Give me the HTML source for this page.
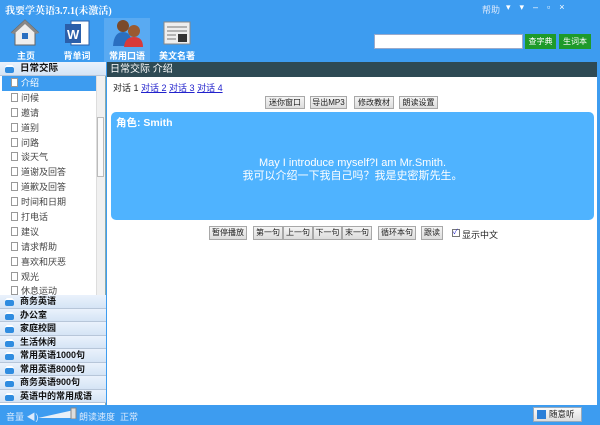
<!DOCTYPE html>
<html><head><meta charset="utf-8"><style>
*{margin:0;padding:0;box-sizing:border-box}
body{width:600px;height:425px;overflow:hidden;background:#3d9cf0;font-family:"Liberation Sans","Noto Sans CJK SC",sans-serif;font-size:9px;position:relative}
.a{position:absolute}
.title{left:5px;top:2px;color:#fff;font-weight:bold;font-size:10px;font-family:"Liberation Serif","Noto Serif CJK SC",serif}
.tb{color:#fff;font-size:9px;font-weight:bold;text-align:center;width:40px}
.btn{position:absolute;background:linear-gradient(#f4f4f4,#dcdcdc);border:1px solid #a8a8a8;font-size:8px;text-align:center;line-height:11px;color:#222}
.li{height:14.9px;line-height:14.9px;padding-left:9px;color:#444;font-size:9px;white-space:nowrap}
.li:before{content:"";display:inline-block;width:7px;height:9px;border:1px solid #999;background:#fff;margin-right:3px;vertical-align:-1px;box-sizing:border-box}
.cat{height:13.5px;border-bottom:1px solid #b7c6d9;background:linear-gradient(#eaf2fc,#d5e4f5);font-weight:bold;font-size:9px;line-height:13px;padding-left:20px;position:relative;color:#111}
.cat:before{content:"";position:absolute;left:5px;top:3px;width:9px;height:8px;background:#2f8ce0;border-radius:2px;box-shadow:inset 0 2px 0 #fff}
</style></head><body>
<div class="a title">我要学英语3.7.1(未激活)</div>
<div class="a" style="left:482px;top:3px;color:#dce9fb;font-size:9px">帮助</div>
<div class="a" style="left:506px;top:2px;color:#fff;font-size:9px;letter-spacing:9px">▾▾–▫×</div>
<div class="a" style="left:104px;top:18px;width:46px;height:44px;background:rgba(255,255,255,.15)"></div>
<svg class="a" style="left:10px;top:18px" width="30" height="30"><polygon points="15,2 2,14 5,14 5,27 25,27 25,14 28,14" fill="#eee" stroke="#666"/><polygon points="15,2 1,15 4,16 15,6 26,16 29,15" fill="#888"/><rect x="12" y="15" width="6" height="6" fill="#2a6fc0"/></svg>
<svg class="a" style="left:63px;top:19px" width="28" height="28"><rect x="8" y="2" width="18" height="24" fill="#fff" stroke="#2b5faa"/><rect x="2" y="5" width="16" height="19" fill="#2b5faa"/><text x="4" y="20" fill="#fff" font-size="13" font-weight="bold" font-family="Liberation Sans">W</text></svg>
<svg class="a" style="left:112px;top:18px" width="32" height="30"><circle cx="11" cy="8" r="6" fill="#7a4a2a"/><path d="M1 28 Q2 14 11 14 Q20 14 20 28Z" fill="#2a6fc0"/><circle cx="22" cy="13" r="6" fill="#9a5a30"/><path d="M12 29 Q13 19 22 19 Q31 19 31 29Z" fill="#d83a3a"/></svg>
<svg class="a" style="left:162px;top:20px" width="30" height="26"><rect x="2" y="2" width="26" height="22" fill="#eee" stroke="#888"/><g stroke="#777"><line x1="5" y1="7" x2="25" y2="7"/><line x1="5" y1="11" x2="25" y2="11"/><line x1="5" y1="15" x2="14" y2="15"/><line x1="5" y1="19" x2="14" y2="19"/></g><rect x="16" y="14" width="9" height="8" fill="#333"/></svg>
<div class="a tb" style="left:6px;top:49px">主页</div>
<div class="a tb" style="left:57px;top:49px">背单词</div>
<div class="a tb" style="left:107px;top:49px">常用口语</div>
<div class="a tb" style="left:157px;top:49px">美文名著</div>
<div class="a" style="left:374px;top:34px;width:149px;height:15px;background:#fff;border:1px solid #9ac"></div>
<div class="a" style="left:525px;top:34px;width:31px;height:15px;background:#1e9a2a;color:#fff;font-size:8px;line-height:15px;text-align:center">查字典</div>
<div class="a" style="left:559px;top:34px;width:32px;height:15px;background:#1e9a2a;color:#fff;font-size:8px;line-height:15px;text-align:center">生词本</div>
<div class="a" style="left:0;top:62px;width:106px;height:343px;background:#fff;border-right:1px solid #8aa"></div>
<div class="a cat" style="left:0;top:62px;width:106px;height:14px;font-size:9.5px">日常交际</div>
<div class="a" style="left:2px;top:76px;width:94px;height:219px;overflow:hidden">
<div class="li" style="background:#3d9cf0;color:#fff">介绍</div>
<div class="li">问候</div><div class="li">邀请</div><div class="li">道别</div><div class="li">问路</div><div class="li">谈天气</div><div class="li">道谢及回答</div><div class="li">道歉及回答</div><div class="li">时间和日期</div><div class="li">打电话</div><div class="li">建议</div><div class="li">请求帮助</div><div class="li">喜欢和厌恶</div><div class="li">观光</div><div class="li">休息运动</div>
</div>
<div class="a" style="left:96px;top:76px;width:9px;height:219px;background:#f0f0f0;border-left:1px solid #ddd"></div>
<div class="a" style="left:97px;top:117px;width:7px;height:60px;background:#fafafa;border:1px solid #bbb"></div>
<div class="a" style="left:0;top:295px;width:106px">
<div class="cat">商务英语</div><div class="cat">办公室</div><div class="cat">家庭校园</div><div class="cat">生活休闲</div><div class="cat">常用英语1000句</div><div class="cat">常用英语8000句</div><div class="cat">商务英语900句</div><div class="cat">英语中的常用成语</div>
</div>
<div class="a" style="left:107px;top:62px;width:490px;height:343px;background:#fff"></div>
<div class="a" style="left:107px;top:62px;width:490px;height:15px;background:#2e4a54;color:#fff;font-size:10px;line-height:15px;padding-left:3px">日常交际 介绍</div>
<div class="a" style="left:113px;top:81px;font-size:9px;color:#222">对话 1 <u style="color:#22c">对话 2</u> <u style="color:#22c">对话 3</u> <u style="color:#22c">对话 4</u></div>
<div class="btn" style="left:265px;top:96px;width:40px;height:13px">迷你窗口</div>
<div class="btn" style="left:310px;top:96px;width:37px;height:13px">导出MP3</div>
<div class="btn" style="left:354px;top:96px;width:40px;height:13px">修改教材</div>
<div class="btn" style="left:399px;top:96px;width:39px;height:13px">朗读设置</div>
<div class="a" style="left:111px;top:112px;width:483px;height:108px;background:#4fb3ff;border-radius:5px;color:#fff">
<div style="position:absolute;left:5px;top:3px;font-size:10.5px;font-weight:bold">角色: Smith</div>
<div style="position:absolute;left:0;width:100%;top:45px;text-align:center;font-size:11px;line-height:13px">May I introduce myself?I am Mr.Smith.<br>我可以介绍一下我自己吗？我是史密斯先生。</div>
</div>
<div class="btn" style="left:209px;top:226px;width:38px;height:14px;line-height:12px">暂停播放</div>
<div class="btn" style="left:253px;top:226px;width:30px;height:14px;line-height:12px">第一句</div>
<div class="btn" style="left:283px;top:226px;width:30px;height:14px;line-height:12px">上一句</div>
<div class="btn" style="left:313px;top:226px;width:29px;height:14px;line-height:12px">下一句</div>
<div class="btn" style="left:342px;top:226px;width:30px;height:14px;line-height:12px">末一句</div>
<div class="btn" style="left:378px;top:226px;width:38px;height:14px;line-height:12px">循环本句</div>
<div class="btn" style="left:421px;top:226px;width:22px;height:14px;line-height:12px">跟读</div>
<div class="a" style="left:452px;top:229px;width:8px;height:8px;border:1px solid #777;background:#fff;font-size:7px;line-height:6px;color:#22c">✓</div>
<div class="a" style="left:462px;top:228px;font-size:9px;color:#222">显示中文</div>
<div class="a" style="left:6px;top:410px;color:#dbeafc;font-size:9px">音量 ◀)</div>
<svg class="a" style="left:38px;top:407px" width="40" height="12"><polygon points="0,11 36,3 36,11" fill="#e8f0f8"/><rect x="33" y="1" width="5" height="11" fill="#ddd" stroke="#888"/></svg>
<div class="a" style="left:79px;top:410px;color:#dbeafc;font-size:9px">朗读速度&nbsp; 正常</div>
<div class="a" style="left:533px;top:407px;width:49px;height:15px;background:linear-gradient(#fafafa,#ddd);border:1px solid #9ab;font-size:8.5px;line-height:13px;padding-left:15px;color:#222">随意听</div>
<div class="a" style="left:537px;top:410px;width:9px;height:9px;background:#2a7fd8"></div>
</body></html>
